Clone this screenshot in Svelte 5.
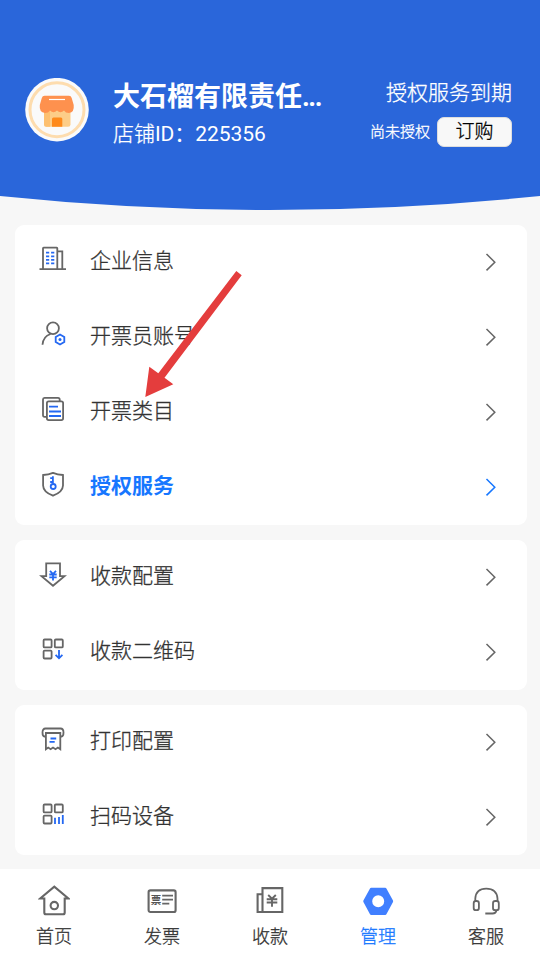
<script lang="ts">
	interface MenuItem {
		icon: string
		label: string
		active?: boolean
	}

	const groups: MenuItem[][] = [
		[
			{ icon: 'building', label: '企业信息' },
			{ icon: 'user', label: '开票员账号' },
			{ icon: 'docs', label: '开票类目' },
			{ icon: 'shield', label: '授权服务', active: true },
		],
		[
			{ icon: 'collect', label: '收款配置' },
			{ icon: 'qrcode', label: '收款二维码' },
		],
		[
			{ icon: 'printer', label: '打印配置' },
			{ icon: 'scanner', label: '扫码设备' },
		],
	]

	const tabs = [
		{ icon: 'home', label: '首页' },
		{ icon: 'invoice', label: '发票' },
		{ icon: 'payment', label: '收款' },
		{ icon: 'manage', label: '管理' },
		{ icon: 'service', label: '客服' },
	]

	let current = $state('manage')
</script>

<div class="page">
	<header class="header">
		<svg class="header-bg" viewBox="0 0 540 210" preserveAspectRatio="none">
			<path d="M0 0H540V196Q270 224 0 196Z" fill="#2a66da" />
		</svg>

		<svg class="avatar" viewBox="0 0 64 64">
			<circle cx="32" cy="31.700" r="31.800" fill="#fafafa" />
			<circle cx="32" cy="31.700" r="27" fill="#fafafa" stroke="#fddcae" stroke-width="3" />
			<path d="M19 31H45.500V46.500Q45.500 48.700 43 48.700H21.500Q19 48.700 19 46.500Z" fill="#fdcd88" />
			<path d="M19 31H25V48.700H21.500Q19 48.700 19 46.500Z" fill="#fdc070" />
			<path d="M27 48.700V41Q27 39.500 28.500 39.500H36Q37.300 39.500 37.300 41V48.700Z" fill="#fe8a1c" />
			<path
				d="M19.500 17.700H44Q46 17.700 46.700 20L48.700 27Q49.500 34.500 44 35Q40.500 35 39 32.500Q35.500 36 32 32.500Q28.500 36 25 32.500Q23.500 35 20 35Q14 34.500 14.800 27L16.800 20Q17.500 17.700 19.500 17.700Z"
				fill="#fe914e"
			/>
			<path d="M24 21.500H40" stroke="#fff" stroke-width="1.200" />
		</svg>

		<div class="shop">
			<div class="shop-name">大石榴有限责任<span class="dots">...</span></div>
			<div class="shop-id"><span class="thin">店铺</span>ID：225356</div>
		</div>

		<div class="license">
			<div class="license-title">授权服务到期</div>
			<div class="license-row">
				<span>尚未授权</span>
				<button class="buy">订购</button>
			</div>
		</div>
	</header>

	<main class="groups">
		{#each groups as group}
			<section class="card">
				{#each group as item}
					<div class="row" class:active={item.active}>
						<svg class="row-icon" viewBox="0 0 30 30">
							{#if item.icon === 'building'}
								<path d="M5 26V5.300Q5 4.700 5.600 4.700H18.700Q19.300 4.700 19.300 5.300V26M19.300 8.300H24.300V26M1.500 26.200H28" />
								<path class="accent" stroke-dasharray="3.200 1.900" d="M8 9.700H16.500M8 13.300H16.500M8 16.800H16.500M8 20.300H16.500" />
							{:else if item.icon === 'user'}
								<circle cx="15" cy="10.300" r="5.900" />
								<path d="M4.500 26.800Q5 18.500 12.500 16" />
								<path class="accent" d="M22 16.500L26.300 19V24L22 26.500L17.700 24V19Z" />
								<circle class="accent-fill" cx="22" cy="21.500" r="1.500" />
							{:else if item.icon === 'docs'}
								<path d="M8.700 23.800H6.500Q5 23.800 5 22.300V6.500Q5 4.900 6.500 4.900H20Q21.700 4.900 21.700 6.500V8" />
								<rect x="8.900" y="8.300" width="16.200" height="18.800" rx="1.800" />
								<path class="accent" d="M11 13.700H20M11 18.500H23M11 23H23" />
							{:else if item.icon === 'shield'}
								<path d="M15 4.900Q19.500 6.800 25 7V17.500Q24.800 24 15 27.700Q5.200 24 5.100 17.500V7Q10.500 6.800 15 4.900Z" />
								<circle class="accent" cx="15.200" cy="18.500" r="2.500" />
								<path class="accent" d="M14.900 15.500V8.200M14.900 10.200H12.200M14.900 14H12.200" />
							{:else if item.icon === 'collect'}
								<path d="M8.200 5.300H22V18.200H26.500L15 27.800L3.500 18.200H8.200Z" />
								<path class="accent" d="M12 12.800L15 16L18 12.800M11.300 16.500H18.700M11.300 19.300H18.700M15 16V22.500" />
							{:else if item.icon === 'qrcode' || item.icon === 'scanner'}
								<rect x="5.600" y="6.500" width="8" height="7.900" rx="1" />
								<rect x="16.800" y="6.500" width="8" height="7.900" rx="1" />
								<rect x="5.600" y="17.600" width="8" height="7.900" rx="1" />
								{#if item.icon === 'qrcode'}
									<path class="accent" d="M21 17V25M17.600 21.800L21 25.300L24.400 21.800" />
								{:else}
									<path class="accent" d="M17 19.800V26M21 19V26M24.800 17V26" />
								{/if}
							{:else if item.icon === 'printer'}
								<path d="M7.700 13.500H6.500Q4.500 13.200 4.500 9.400Q4.500 5.500 7.500 5.500H22.500Q25.500 5.500 25.500 9.400Q25.500 13.200 23.500 13.500H22.300" />
								<path d="M7.900 10H22.300V26.200L19.900 24.500L17.500 26.200L15 24.500L12.600 26.200L10.200 24.500L7.900 26.200Z" />
								<path class="accent" d="M12.500 15.500H18.200M11.500 18.800H16.700" />
							{/if}
						</svg>
						<span class="row-label">{item.label}</span>
						<svg class="chevron" viewBox="0 0 12 18">
							<path d="M1.500 1L9.800 9.200L1.500 17.400" />
						</svg>
					</div>
				{/each}
			</section>
		{/each}
	</main>

	<nav class="tabbar">
		{#each tabs as tab}
			<button class="tab" class:current={current === tab.icon} onclick={() => (current = tab.icon)}>
				<svg class="tab-icon" viewBox="0 0 32 32">
					{#if tab.icon === 'home'}
						<path d="M6.300 13.500H2.200L16.300 1.700L30.400 13.500H26.700V27.500Q26.700 29.300 25 29.300H8Q6.300 29.300 6.300 27.500Z" />
						<circle cx="16.300" cy="20.600" r="3.700" />
					{:else if tab.icon === 'invoice'}
						<rect x="2.600" y="5.400" width="27" height="21.600" rx="1.800" />
						<text x="4.800" y="18.500">票</text>
						<path d="M16.200 10.700H27M16.200 14.700H27M16.200 18.700H23.300" stroke-width="1.700" />
					{:else if tab.icon === 'payment'}
						<path d="M8.500 27H3.600V9.200H8.500M8.500 3.100H28.300V27H8.500Z" />
						<path d="M14.200 10L18 13.700L21.800 10M12.700 14.200H23.300M12.700 17.500H23.300M18 14V21.800" stroke-width="1.900" />
					{:else if tab.icon === 'manage'}
						<path
							class="solid"
							d="M9.200 2.700H23.200Q24 2.700 24.400 3.400L31 15.600Q31.300 16.300 31 17L24.400 29.300Q24 30 23.200 30H9.200Q8.400 30 8 29.300L1.400 17Q1.100 16.300 1.400 15.600L8 3.400Q8.400 2.700 9.200 2.700ZM16.200 10.300A6 6 0 1 0 16.200 22.300A6 6 0 1 0 16.200 10.300Z"
						/>
					{:else}
						<g stroke-width="1.800">
							<path d="M5.300 16.500V13.500Q6 3.700 16.200 3.700Q26.700 3.700 27.500 13.500V16.500" />
							<rect x="3.700" y="16" width="5.200" height="9.200" rx="2.300" />
							<rect x="23" y="16" width="5.800" height="9.200" rx="2.300" />
							<path d="M26.600 25Q26 28.500 22.500 28.500H15.300" />
						</g>
					{/if}
				</svg>
				<span>{tab.label}</span>
			</button>
		{/each}
	</nav>

	<!-- pointer laid over the menu -->
	<svg class="pointer" viewBox="0 0 100 130">
		<path d="M96.300 1L101.700 5.300L24.500 107.700L33.300 114.300L5.300 127L9.300 96.700L18.300 103.300Z" />
	</svg>
</div>

<style>
	:global(body) {
		background: #f7f7f7;
	}

	.page {
		position: relative;
		display: flex;
		flex-direction: column;
		width: 540px;
		height: 960px;
		overflow: hidden;
		background: #f7f7f7;
		color: #333;
		font-family: Roboto, 'Noto Sans CJK SC', sans-serif;
	}

	.header {
		position: relative;
		display: flex;
		align-items: flex-start;
		box-sizing: border-box;
		height: 210px;
		padding: 78px 28px 0 25px;
		color: #fff;
	}

	.header > * {
		position: relative;
	}

	.header .header-bg {
		position: absolute;
		top: 0;
		left: 0;
		width: 540px;
		height: 210px;
	}

	.avatar {
		flex: none;
		width: 64px;
		height: 64px;
	}

	.shop {
		margin-left: 24px;
		white-space: nowrap;
	}

	.shop-name {
		padding-top: 1px;
		font-size: 27px;
		font-weight: 700;
		line-height: 36px;
	}

	.dots {
		letter-spacing: -1.5px;
	}

	.shop-id {
		margin-top: 2px;
		font-size: 21px;
		letter-spacing: -0.05px;
		line-height: 34px;
	}

	.license {
		display: flex;
		flex-direction: column;
		align-items: flex-end;
		margin-left: auto;
	}

	.license-title {
		height: 38px;
		padding-top: 1px;
		font-size: 21px;
		line-height: 29px;
	}

	.license-row {
		display: flex;
		align-items: center;
		gap: 7px;
		font-size: 15px;
		line-height: 30px;
	}

	.license-row span {
		padding-top: 1px;
		line-height: 29px;
	}

	/* light weight, thickened a touch */
	.thin,
	.license,
	.row-label,
	.tab span {
		font-weight: 300;
		-webkit-text-stroke: 0.3px currentColor;
	}

	.buy {
		width: 75px;
		height: 30px;
		padding: 0 0 1px;
		border: 1px solid #dedede;
		border-radius: 7px;
		background: #f8f8f8;
		color: #000;
		font-family: inherit;
		font-size: 19px;
		font-weight: inherit;
		line-height: 27px;
		-webkit-text-stroke: 0.3px #000;
	}

	.groups {
		display: flex;
		flex: 1;
		flex-direction: column;
		gap: 15px;
		padding: 15px 13px 0 15px;
	}

	.card {
		border-radius: 9px;
		background: #fff;
	}

	.row {
		display: flex;
		align-items: center;
		box-sizing: border-box;
		height: 75px;
		padding: 0 30px 0 23px;
	}

	.row-icon {
		width: 30px;
		height: 30px;
		margin-bottom: 9px;
		fill: none;
		stroke: #666;
		stroke-width: 1.8;
	}

	.accent {
		stroke: #2468f2;
	}

	.accent-fill {
		fill: #2468f2;
		stroke: none;
	}

	.row-label {
		flex: 1;
		margin: 0 0 3px 22px;
		font-size: 21px;
		line-height: 30px;
	}

	.chevron {
		width: 12px;
		height: 18px;
		margin-bottom: 2px;
		fill: none;
		stroke: #666;
		stroke-width: 1.5;
	}

	.active .row-label {
		color: #1677ff;
		font-weight: 700;
		-webkit-text-stroke: 0;
	}

	.active .chevron {
		stroke: #1677ff;
	}

	.tabbar {
		display: flex;
		flex: none;
		height: 91px;
		background: #fff;
	}

	.tab {
		display: flex;
		flex: 1;
		flex-direction: column;
		align-items: center;
		padding: 16px 0 0;
		border: 0;
		background: none;
		color: #333;
		font-family: inherit;
		font-size: 18px;
		line-height: 26px;
	}

	.tab span {
		margin-top: 7px;
	}

	.tab-icon {
		width: 32px;
		height: 32px;
		fill: none;
		stroke: #666;
		stroke-width: 2.1;
	}

	.tab-icon text {
		fill: #555;
		stroke: none;
		font-size: 10.5px;
		font-weight: 700;
	}

	.tab-icon .solid {
		fill: #407fff;
		fill-rule: evenodd;
		stroke: none;
	}

	.tab.current {
		color: #1677ff;
	}

	.pointer {
		position: absolute;
		top: 270px;
		left: 140px;
		width: 100px;
		height: 130px;
		overflow: visible;
		fill: #e43d3d;
		pointer-events: none;
	}
</style>
